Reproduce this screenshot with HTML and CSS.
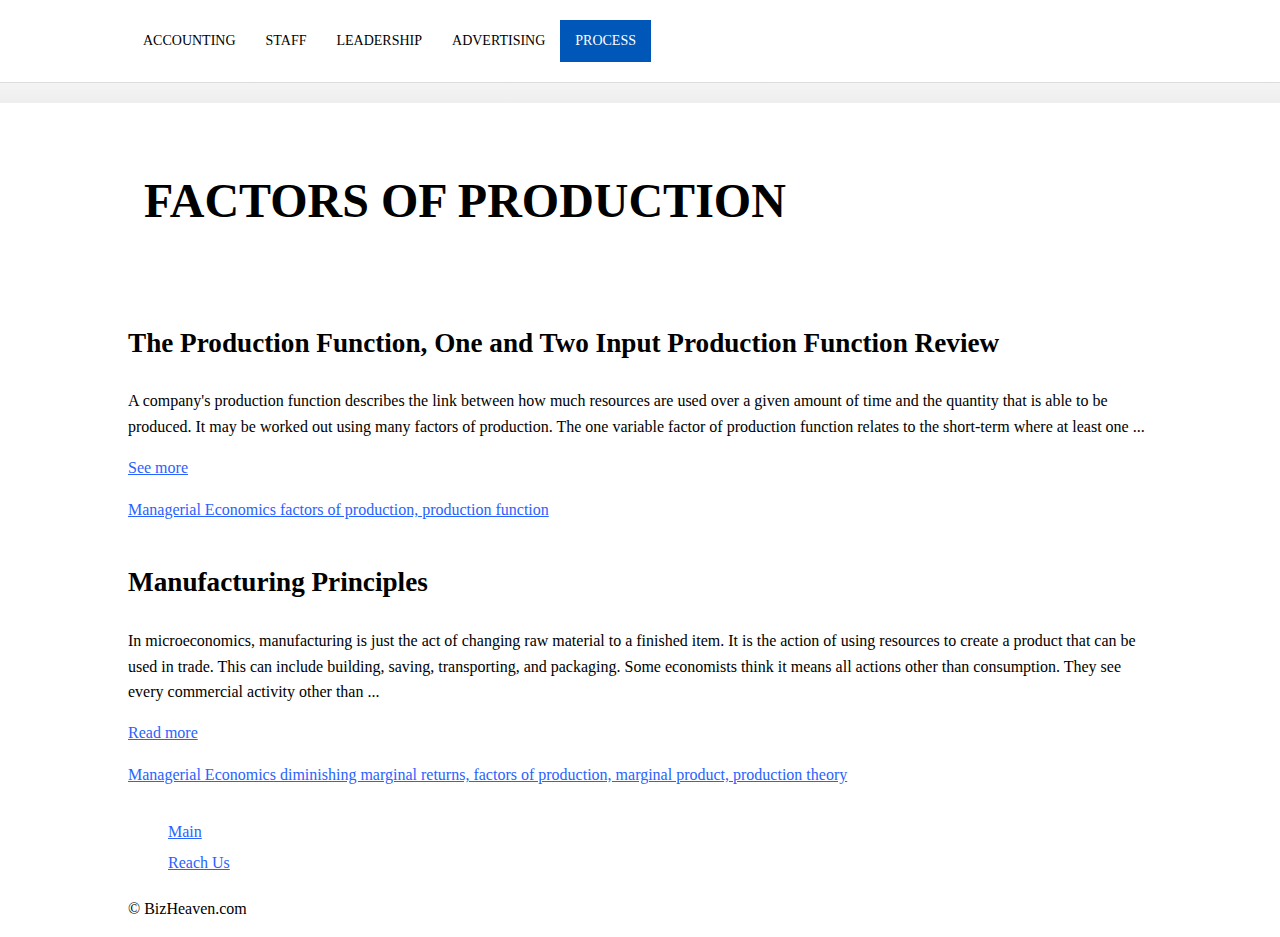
FILE: index.html
```html
<!DOCTYPE html>
<html lang="en">
<head>
<meta charset="utf-8">
<title>Factors of Production</title>
<link rel="stylesheet" href="styles.css">
</head>
<body>
<header class="site-header">
  <nav class="nav">
    <a class="nav-item" href="#">ACCOUNTING</a>
    <a class="nav-item" href="#">STAFF</a>
    <a class="nav-item" href="#">LEADERSHIP</a>
    <a class="nav-item" href="#">ADVERTISING</a>
    <a class="nav-item active" href="#">PROCESS</a>
  </nav>
</header>
<div class="band"></div>
<main class="container">
  <h1 class="page-title">FACTORS OF PRODUCTION</h1>
  <article class="post">
    <h2 class="post-title">The Production Function, One and Two Input Production Function Review</h2>
    <p class="post-text">A company's production function describes the link between how much resources are used over a given amount of time and the quantity that is able to be produced. It may be worked out using many factors of production. The one variable factor of production function relates to the short-term where at least one ...</p>
    <p class="post-link"><a href="#">See more</a></p>
    <p class="post-link"><a href="#">Managerial Economics factors of production, production function</a></p>
  </article>
  <article class="post">
    <h2 class="post-title">Manufacturing Principles</h2>
    <p class="post-text">In microeconomics, manufacturing is just the act of changing raw material to a finished item. It is the action of using resources to create a product that can be used in trade. This can include building, saving, transporting, and packaging. Some economists think it means all actions other than consumption. They see every commercial activity other than ...</p>
    <p class="post-link"><a href="#">Read more</a></p>
    <p class="post-link"><a href="#">Managerial Economics diminishing marginal returns, factors of production, marginal product, production theory</a></p>
  </article>
  <footer class="footer">
    <ul class="footer-links">
      <li><a href="#">Main</a></li>
      <li><a href="#">Reach Us</a></li>
    </ul>
    <p class="copyright">© BizHeaven.com</p>
  </footer>
</main>
</body>
</html>
```
FILE: styles.css
```css
html, body {
  margin: 0;
  padding: 0;
  background: #fff;
  color: #000;
  font-family: "Liberation Serif", "Times New Roman", serif;
  font-size: 16px;
}
.site-header {
  height: 82px;
  border-bottom: 1px solid #dcdcdc;
  box-sizing: content-box;
}
.nav {
  display: flex;
  padding: 20px 128px 0;
}
.nav-item {
  display: block;
  height: 42px;
  line-height: 42px;
  padding: 0 15px;
  font-size: 14px;
  color: #000;
  text-decoration: none;
}
.nav-item.active {
  background: #0057b8;
  color: #fff;
}
.band {
  height: 20px;
  background: linear-gradient(#f4f4f4, #eeeeee);
}
.container {
  width: 1024px;
  margin: 0 auto;
}
.page-title {
  margin: 0;
  padding: 70px 16px 0;
  font-size: 48px;
  line-height: 56px;
  font-weight: bold;
}
.post {
  padding-top: 56px;
}
.post + .post {
  padding-top: 21px;
}
.post-title {
  margin: 40px 0 0;
  font-size: 27.2px;
  line-height: 36px;
}
.post + .post .post-title { margin-top: 20px; }
.post-text {
  margin: 27px 0 0;
  line-height: 25.6px;
}
.post + .post .post-text { margin-top: 28px; }
.post-link {
  margin: 16px 0 0;
  line-height: 26px;
}
.post + .post .post-text + .post-link { margin-top: 15px; }
.post-link a, .footer a {
  color: #2962ff;
}
.footer {
  padding-top: 28px;
}
.footer-links {
  margin: 0;
  padding-left: 40px;
  list-style: none;
}
.footer-links li {
  line-height: 31px;
}
.copyright {
  margin: 18px 0 0;
  line-height: 26px;
}
```
